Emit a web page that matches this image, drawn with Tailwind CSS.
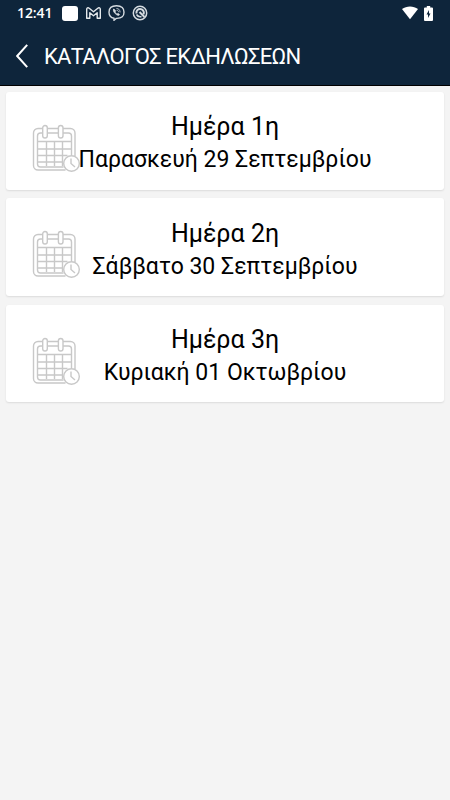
<!DOCTYPE html>
<html lang="el">
<head>
  <meta charset="UTF-8" />
  <meta name="viewport" content="width=device-width, initial-scale=1.0" />
  <title>Κατάλογος Εκδηλώσεων</title>
  <script src="https://cdn.jsdelivr.net/npm/@tailwindcss/browser@4"></script>
</head>
<body class="min-h-screen bg-[#f4f4f4] font-[Roboto,sans-serif] text-black">
  <!-- Calendar icon shared by the day cards -->
  <svg class="hidden">
    <symbol id="calendar" viewBox="0 0 48 50" fill="none" stroke="#c8c8c8" stroke-width="1.4">
      <path d="M33.500 46H6a4.500 4.500 0 0 1-4.500-4.500V9A4.500 4.500 0 0 1 6 4.500h4.500M15.500 4.500h11M31 4.500h7.500A4.500 4.500 0 0 1 43 9V32" />
      <path d="M31.500 43H8.500A3 3 0 0 1 5.500 40V12a3 3 0 0 1 3-3h2M15.500 9h11M31 9h5.500a3 3 0 0 1 3 3v19.500" />
      <rect x="10.700" y="1.500" width="4.600" height="12.500" rx="2.300" fill="#fff" />
      <rect x="26.400" y="1.500" width="4.600" height="12.500" rx="2.300" fill="#fff" />
      <path d="M5.500 17.500h34M5.500 25h34M5.500 31.500h30M5.500 38h26M14.500 17.500V42M22.500 17.500V42M30.500 17.500V42" />
      <circle cx="39.500" cy="39.500" r="7.800" fill="#fff" />
      <path d="M39 34.500v5l4 3.500" />
    </symbol>
  </svg>

  <header class="h-[86px] border-b border-black bg-[#0e253b] text-white">
    <!-- Status bar -->
    <div class="flex h-[26px] items-center pl-[17px] pr-[17px]">
      <span class="w-[35px] whitespace-nowrap font-['Open_Sans',sans-serif] text-[14px] font-semibold leading-none tracking-[-0.1px]">12:41</span>
      <span class="ml-[10px] h-[15px] w-[16px] rounded-[3px] bg-white"></span>
      <svg class="ml-2 h-3 w-[15px]" viewBox="0 0 15 12" fill="none" stroke="#e5e9ec" stroke-width="1.400" stroke-linejoin="round">
        <path d="M.7 11.200V2.200C.7.800 2 .300 3.200 1.200L7.500 4.700l4.300-3.500c1.200-.9 2.500-.4 2.500 1v9h-3.100V5.800L7.500 8.700 3.800 5.800v5.400z" />
      </svg>
      <svg class="ml-[7px] h-4 w-[17px]" viewBox="0 0 17 16" fill="none" stroke="#d5dbe0" stroke-width="1.400" stroke-linecap="round">
        <path d="M6 13.300v2l2.200-1.900C14 13.600 16 11 16 7.200S13.800.800 8.500.800 1 3.200 1 7.200c0 3.200 1.500 5.400 5 6.100z" />
        <path d="M5.500 4.300c-.8.800.3 2.900 1.700 4.300s3.300 2.400 4 1.500c.8-.8-.7-1.900-1.500-1.500l-.7.500C8 8.600 7.300 7.900 7 7l.5-.7c.3-.8-1-2.500-2-2z" fill="#d5dbe0" stroke-width=".7" />
        <path d="M8.800 3.500c2 .1 3.200 1.300 3.300 3.500M9 5.300c1 0 1.400.6 1.500 1.500" stroke-width=".8" />
      </svg>
      <svg class="ml-[7px] h-4 w-4" viewBox="0 0 16 16" fill="none" stroke="#d5dbe0" stroke-width="1.500">
        <circle cx="8" cy="8" r="6.700" />
        <path d="M4.500 8.500C4 5.500 6 4 8 4c2.800 0 4.500 2.500 3.700 5.200M7.500 7l5 5" stroke-width="2" />
        <path d="M4.500 9.500c1.200 2 3 2.500 5 2" />
      </svg>
      <svg class="ml-auto h-[14px] w-4" viewBox="0 0 16 14" fill="#fff">
        <path d="M0 3.100C4.500-.4 11.500-.4 16 3.100L8 13.300z" />
      </svg>
      <svg class="ml-[6px] h-[15px] w-[9px]" viewBox="0 0 9 15">
        <path d="M2.800 0h3.400v1.500H8a1 1 0 0 1 1 1V14a1 1 0 0 1-1 1H1a1 1 0 0 1-1-1V2.500a1 1 0 0 1 1-1h1.800z" fill="#fff" />
        <path d="M5 4v3.500h1.500L4 12V8.500H2.500z" fill="#0e253b" />
      </svg>
    </div>
    <!-- App bar -->
    <div class="flex h-[59px] items-center pl-4">
      <svg class="h-6 w-3 shrink-0" viewBox="0 0 12 24" fill="none" stroke="#fff" stroke-width="2">
        <path d="M11.200.800 1.200 12l10 11.200" />
      </svg>
      <h1 class="relative top-px ml-4 whitespace-nowrap text-[22px] leading-none tracking-[-0.72px]">ΚΑΤΑΛΟΓΟΣ ΕΚΔΗΛΩΣΕΩΝ</h1>
    </div>
  </header>

  <main class="flex flex-col gap-[8.800px] px-[6px] pt-[6px]">
    <section class="relative h-[97.500px] rounded-[3px] bg-white pt-[20.400px] text-center shadow-[0_1px_2px_rgba(0,0,0,0.1)]">
      <svg class="absolute left-[26px] top-[32px] h-[50px] w-[48px]"><use href="#calendar" /></svg>
      <h2 class="relative text-[25px] leading-[30px]">Ημέρα 1η</h2>
      <p class="relative whitespace-nowrap text-[23px] leading-[36px]">Παρασκευή 29 Σεπτεμβρίου</p>
    </section>
    <section class="relative h-[97.500px] rounded-[3px] bg-white pt-[20.400px] text-center shadow-[0_1px_2px_rgba(0,0,0,0.1)]">
      <svg class="absolute left-[26px] top-[32px] h-[50px] w-[48px]"><use href="#calendar" /></svg>
      <h2 class="relative text-[25px] leading-[30px]">Ημέρα 2η</h2>
      <p class="relative whitespace-nowrap text-[23px] leading-[36px]">Σάββατο 30 Σεπτεμβρίου</p>
    </section>
    <section class="relative h-[97.500px] rounded-[3px] bg-white pt-[20.400px] text-center shadow-[0_1px_2px_rgba(0,0,0,0.1)]">
      <svg class="absolute left-[26px] top-[32px] h-[50px] w-[48px]"><use href="#calendar" /></svg>
      <h2 class="relative text-[25px] leading-[30px]">Ημέρα 3η</h2>
      <p class="relative whitespace-nowrap text-[23px] leading-[36px]">Κυριακή 01 Οκτωβρίου</p>
    </section>
  </main>
</body>
</html>
